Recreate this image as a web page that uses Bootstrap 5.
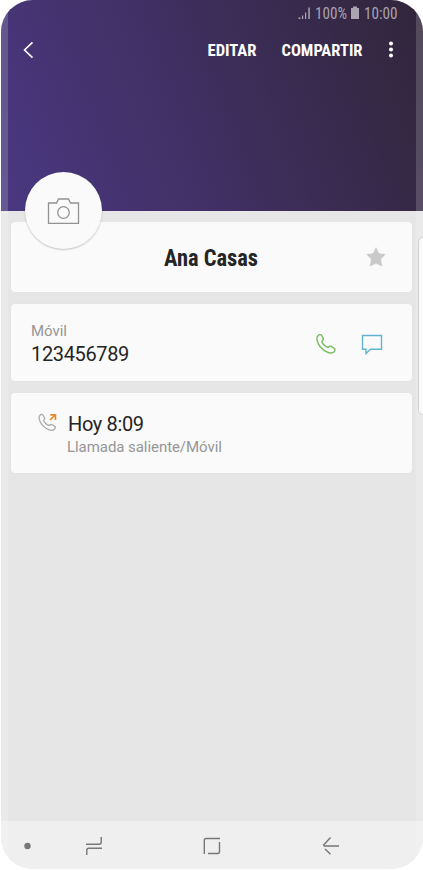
<!DOCTYPE html>
<html lang="es">
<head>
<meta charset="utf-8">
<meta name="viewport" content="width=device-width, initial-scale=1">
<title>Ana Casas</title>
<link href="https://cdn.jsdelivr.net/npm/bootstrap@5.3.0/dist/css/bootstrap.min.css" rel="stylesheet">
<style>
body{background:#fff;font-family:Roboto,sans-serif;color:#252525;overflow:hidden}
.phone{width:422px;height:869px;margin-left:1px;border-radius:32px;background:#e6e6e6}
.hero{height:211px;background:linear-gradient(69deg,#493881 0%,#43316a 35%,#3a2b51 68%,#30263a 100%);color:#fff}
.edge{width:7px;background:rgba(255,255,255,.17)}
.status{height:27px;padding:0 22px 1px 0}
.actions{height:46px;padding:0 28px 0 21px}
.cond{display:block;white-space:nowrap;overflow:visible}
.cond text{font-family:"Roboto Condensed",Roboto,sans-serif}
.avatar{width:77px;height:77px;left:24px;top:172px;background:#fafafa;box-shadow:0 1px 2px rgba(0,0,0,.22)}
.panels{padding:11px 11px 0 10px}
.panel{background:#fafafa;border-radius:4px;box-shadow:0 0 1px rgba(0,0,0,.08)}
.p-name{height:70px}
.p-number{height:77px;margin-top:12px;padding:2px 28px 0 20px}
.p-log{height:80px;margin-top:12px;padding:18px 0 0 27px}
.dim{color:#969696;font-size:15px;line-height:20px;letter-spacing:-.06px}
.big{font-size:20px;line-height:26px;letter-spacing:-.36px}
.log-text{margin-left:9px}
.log-time{padding-left:1px}
.side-tab{right:-5px;top:237px;width:10px;height:178px;background:#fafafa;border:1px solid #d2d2d2;border-radius:6px}
.navkeys{height:48px;background:#efefef}
.star{right:26px;top:24px}
svg{display:block;flex:none}
</style>
</head>
<body>
<main class="phone position-relative overflow-hidden d-flex flex-column">
  <header class="hero flex-shrink-0">
    <div class="status d-flex justify-content-end align-items-center">
      <svg width="104" height="26" viewBox="297 0 104 26" fill="#aaa3b2" class="cond">
        <path d="M298.500 17.500h2v1.500h-2zM302 15.500h1.200V19H302zM305 12.500h1.200V19H305zM308.300 7.500h1.500V19h-1.500z"/>
        <text x="315" y="19" font-size="16" textLength="32" lengthAdjust="spacingAndGlyphs">100%</text>
        <path d="M353 6.500h4V8h2v11h-8V8h2z"/>
        <text x="364" y="19" font-size="16" textLength="33.500" lengthAdjust="spacingAndGlyphs">10:00</text>
      </svg>
    </div>
    <div class="actions d-flex align-items-center">
      <svg width="12" height="18" viewBox="0 0 12 18" fill="none" stroke="#fff" stroke-width="1.600"><path d="M10.500 1.300 2.500 9l8 7.700"/></svg>
      <svg class="cond ms-auto" width="50" height="24" fill="#fff"><text x="0.500" y="18" font-size="17" font-weight="700" textLength="49" lengthAdjust="spacingAndGlyphs">EDITAR</text></svg>
      <svg class="cond" width="110" height="24" fill="#fff"><text x="24.500" y="18" font-size="17" font-weight="700" textLength="81" lengthAdjust="spacingAndGlyphs">COMPARTIR</text></svg>
      <svg width="28" height="18" fill="#fff"><circle cx="24" cy="2.500" r="2"/><circle cx="24" cy="8.500" r="2"/><circle cx="24" cy="14.500" r="2"/></svg>
    </div>
  </header>

  <section class="panels d-flex flex-column flex-grow-1">
    <div class="panel p-name position-relative d-flex align-items-center">
      <svg class="cond" width="401" height="70" fill="#252525"><text x="153" y="44" font-size="23" font-weight="700" textLength="94" lengthAdjust="spacingAndGlyphs">Ana Casas</text></svg>
      <svg class="star position-absolute" width="20" height="22" viewBox="0 0 20 22" fill="#cacaca"><path d="M10 1 12.900 7.300 19.600 8.300 14.900 13.200 16.200 20.500 10 17.500 3.800 20.500 5.100 13.200.4 8.300 7.100 7.300z"/></svg>
    </div>
    <div class="panel p-number d-flex align-items-center justify-content-between">
      <div>
        <div class="dim">Móvil</div>
        <div class="big">123456789</div>
      </div>
      <div class="d-flex align-items-center">
        <svg width="20" height="20" viewBox="0 0 20 20" fill="none" stroke="#78bd61" stroke-width="1.400" stroke-linejoin="round"><path d="M2.200 1.600C3.500.4 4.800.3 5.600 1.500L7.200 4.300C7.700 5.400 7.100 6.300 5.800 7.300C6.100 9.600 9.300 13 12.200 13.600C13 12.200 14.200 11.700 15.300 12.400L18.200 14.400C19.500 15.400 19.200 16.700 17.900 17.900C15.800 19.800 12.400 19.100 8.800 16.800C5.300 14.500 2.200 10.600 1.100 6.500C.6 4.300.9 2.600 2.200 1.600z"/></svg>
        <svg class="ms-4" width="24" height="22" viewBox="0 0 24 22" fill="none" stroke="#62b3d1" stroke-width="1.400"><path d="M2.500 2.500h19v13.700H10.500L6 20.500v-4.300H2.500z"/></svg>
      </div>
    </div>
    <div class="panel p-log d-flex align-items-start">
      <svg width="20" height="22" viewBox="0 0 20 22" fill="none" stroke-linejoin="round"><path stroke="#aaa" stroke-width="1.300" d="M2 4.300C3.200 3.200 4.300 3.200 5 4.200L6.500 6.800C7 7.800 6.300 8.600 5.500 9.200C6 11.200 8.800 14 11.500 14.700C12.300 13.500 13.300 13.300 14.200 13.800L16.700 15.400C17.700 16.100 17.400 17.300 16.400 18.300C14.500 20.100 11 19.100 8 17.200C4.900 15.200 2.200 11.800 1.300 8.400C.8 6.500 1 5.200 2 4.300z"/><path stroke="#e88b2a" stroke-width="1.700" stroke-linejoin="miter" d="M12 9l5-5M12.300 3.800h5.100v5.100"/></svg>
      <div class="log-text">
        <div class="big log-time">Hoy 8:09</div>
        <div class="dim">Llamada saliente/Móvil</div>
      </div>
    </div>
  </section>

  <nav class="navkeys flex-shrink-0">
    <svg width="422" height="48" viewBox="1 821 422 48" fill="none" stroke="#777" stroke-width="1.400"><circle cx="27.500" cy="846" r="3.200" fill="#777" stroke="none"/><path d="M86 844.200h13.200q2 0 2-2V837M102 848.200H88.800q-2 0-2 2V855M204.300 854v-13.500q0-2 2-2H220M219.500 842v9.500q0 2-2 2H208M339 846h-15.500M330.500 837.500l-7.300 8M325 849l5.500 5.200"/></svg>
  </nav>

  <div class="edge position-absolute top-0 bottom-0 start-0"></div>
  <div class="edge position-absolute top-0 bottom-0 end-0"></div>
  <div class="side-tab position-absolute"></div>
  <div class="avatar position-absolute rounded-circle d-flex align-items-center justify-content-center">
    <svg width="34" height="30" viewBox="0 0 34 30" fill="none" stroke="#929292" stroke-width="1.300"><path d="M1.500 7h8l2-4h10l2 4h8v20.300h-30z"/><circle cx="16.500" cy="16.500" r="5.800"/></svg>
  </div>
</main>
<script src="https://cdn.jsdelivr.net/npm/bootstrap@5.3.0/dist/js/bootstrap.bundle.min.js"></script>
</body>
</html>
